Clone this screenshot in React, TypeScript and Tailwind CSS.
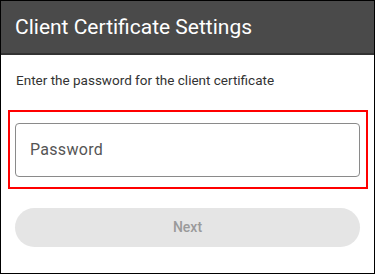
export default function App() {
  return (
    <div className="w-[375px] h-[274px] border border-black bg-white flex flex-col overflow-hidden" style={{ fontFamily: 'Roboto, "Liberation Sans", sans-serif' }}>
      <div className="h-[55px] shrink-0 bg-[#4a4a4a] border-b-2 border-[#333333] flex items-center pl-[15px] -mt-px -mx-px">
        <span className="text-white text-[21px] leading-none mt-[1px]">Client Certificate Settings</span>
      </div>
      <div className="pl-[15px] pt-[16px] text-[13.5px] leading-[18px] text-[#333333]">Enter the password for the client certificate</div>
      <div className="mt-[21px] ml-[7px] w-[360px] h-[79px] border-2 border-[#ff0000] flex items-center">
        <div className="ml-[5px] w-[345px] h-[54px] border-[1.5px] border-[#8a8a8a] rounded-[4px] flex items-center pl-[14px]">
          <span className="text-[16px] tracking-[0.3px] text-[#555555]">Password</span>
        </div>
      </div>
      <div className="mt-[19px] ml-[14px] w-[345px] h-[39px] rounded-full bg-[#e5e5e5] flex items-center justify-center">
        <span className="text-[14px] text-[#9a9a9a] font-medium">Next</span>
      </div>
    </div>
  );
}
